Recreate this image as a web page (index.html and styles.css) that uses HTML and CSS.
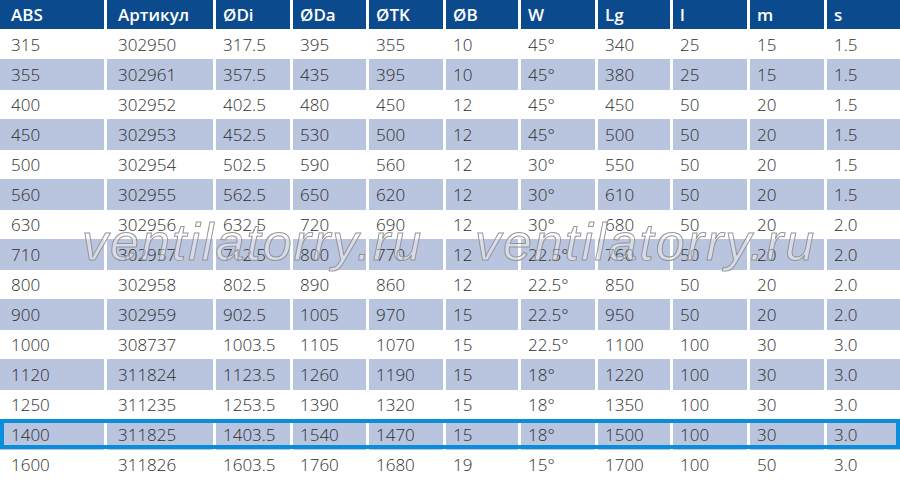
FILE: index.html
```html
<!DOCTYPE html>
<html lang="ru">
<head>
<meta charset="utf-8">
<title>ABS</title>
<link rel="stylesheet" href="styles.css">
</head>
<body>
<div class="sheet">
  <div class="row head">
    <div class="c">ABS</div><div class="c">Артикул</div><div class="c">ØDi</div><div class="c">ØDa</div><div class="c">ØTK</div><div class="c">ØB</div><div class="c">W</div><div class="c">Lg</div><div class="c">l</div><div class="c">m</div><div class="c">s</div>
  </div>
  <div class="row"><div class="c">315</div><div class="c">302950</div><div class="c">317.5</div><div class="c">395</div><div class="c">355</div><div class="c">10</div><div class="c">45°</div><div class="c">340</div><div class="c">25</div><div class="c">15</div><div class="c">1.5</div></div>
  <div class="row alt"><div class="c">355</div><div class="c">302961</div><div class="c">357.5</div><div class="c">435</div><div class="c">395</div><div class="c">10</div><div class="c">45°</div><div class="c">380</div><div class="c">25</div><div class="c">15</div><div class="c">1.5</div></div>
  <div class="row"><div class="c">400</div><div class="c">302952</div><div class="c">402.5</div><div class="c">480</div><div class="c">450</div><div class="c">12</div><div class="c">45°</div><div class="c">450</div><div class="c">50</div><div class="c">20</div><div class="c">1.5</div></div>
  <div class="row alt"><div class="c">450</div><div class="c">302953</div><div class="c">452.5</div><div class="c">530</div><div class="c">500</div><div class="c">12</div><div class="c">45°</div><div class="c">500</div><div class="c">50</div><div class="c">20</div><div class="c">1.5</div></div>
  <div class="row"><div class="c">500</div><div class="c">302954</div><div class="c">502.5</div><div class="c">590</div><div class="c">560</div><div class="c">12</div><div class="c">30°</div><div class="c">550</div><div class="c">50</div><div class="c">20</div><div class="c">1.5</div></div>
  <div class="row alt"><div class="c">560</div><div class="c">302955</div><div class="c">562.5</div><div class="c">650</div><div class="c">620</div><div class="c">12</div><div class="c">30°</div><div class="c">610</div><div class="c">50</div><div class="c">20</div><div class="c">1.5</div></div>
  <div class="row"><div class="c">630</div><div class="c">302956</div><div class="c">632.5</div><div class="c">720</div><div class="c">690</div><div class="c">12</div><div class="c">30°</div><div class="c">680</div><div class="c">50</div><div class="c">20</div><div class="c">2.0</div></div>
  <div class="row alt"><div class="c">710</div><div class="c">302957</div><div class="c">712.5</div><div class="c">800</div><div class="c">770</div><div class="c">12</div><div class="c">22.5°</div><div class="c">760</div><div class="c">50</div><div class="c">20</div><div class="c">2.0</div></div>
  <div class="row"><div class="c">800</div><div class="c">302958</div><div class="c">802.5</div><div class="c">890</div><div class="c">860</div><div class="c">12</div><div class="c">22.5°</div><div class="c">850</div><div class="c">50</div><div class="c">20</div><div class="c">2.0</div></div>
  <div class="row alt"><div class="c">900</div><div class="c">302959</div><div class="c">902.5</div><div class="c">1005</div><div class="c">970</div><div class="c">15</div><div class="c">22.5°</div><div class="c">950</div><div class="c">50</div><div class="c">20</div><div class="c">2.0</div></div>
  <div class="row"><div class="c">1000</div><div class="c">308737</div><div class="c">1003.5</div><div class="c">1105</div><div class="c">1070</div><div class="c">15</div><div class="c">22.5°</div><div class="c">1100</div><div class="c">100</div><div class="c">30</div><div class="c">3.0</div></div>
  <div class="row alt"><div class="c">1120</div><div class="c">311824</div><div class="c">1123.5</div><div class="c">1260</div><div class="c">1190</div><div class="c">15</div><div class="c">18°</div><div class="c">1220</div><div class="c">100</div><div class="c">30</div><div class="c">3.0</div></div>
  <div class="row"><div class="c">1250</div><div class="c">311235</div><div class="c">1253.5</div><div class="c">1390</div><div class="c">1320</div><div class="c">15</div><div class="c">18°</div><div class="c">1350</div><div class="c">100</div><div class="c">30</div><div class="c">3.0</div></div>
  <div class="row alt selected"><div class="c">1400</div><div class="c">311825</div><div class="c">1403.5</div><div class="c">1540</div><div class="c">1470</div><div class="c">15</div><div class="c">18°</div><div class="c">1500</div><div class="c">100</div><div class="c">30</div><div class="c">3.0</div></div>
  <div class="row"><div class="c">1600</div><div class="c">311826</div><div class="c">1603.5</div><div class="c">1760</div><div class="c">1680</div><div class="c">19</div><div class="c">15°</div><div class="c">1700</div><div class="c">100</div><div class="c">50</div><div class="c">3.0</div></div>
  <div class="mark mark-1">ventilatorry.ru</div>
  <div class="mark mark-2">ventilatorry.ru</div>
</div>
</body>
</html>
```
FILE: styles.css
```css
html, body {
  margin: 0;
  padding: 0;
  background: #ffffff;
}
.sheet {
  position: relative;
  width: 900px;
  height: 482px;
  overflow: hidden;
  font-family: "Open Sans", "Noto Sans", sans-serif;
}
.row {
  display: grid;
  grid-template-columns: 104px 106px 74px 73px 74px 72px 74px 72px 74px 74px 1fr;
  column-gap: 3px;
  height: 30px;
  position: relative;
}
.c {
  padding-left: 7px;
  font-size: 17px;
  font-weight: 300;
  line-height: 31px;
  color: #2e2e2e;
  white-space: nowrap;
}
.c:nth-child(1), .c:nth-child(2) {
  padding-left: 11px;
}
.head {
  height: 29px;
}
.head .c {
  background: #0b4a8d;
  color: #ffffff;
  font-weight: 600;
  font-size: 17px;
  line-height: 29px;
}
.alt .c {
  background: #b9c4de;
}
.selected::after {
  content: "";
  position: absolute;
  inset: 0;
  border: 4px solid #0a8ddb;
  pointer-events: none;
}
.mark {
  position: absolute;
  top: 212px;
  font-family: "Liberation Sans", Arial, sans-serif;
  font-style: italic;
  font-size: 52px;
  letter-spacing: 2px;
  line-height: 60px;
  color: rgba(255, 255, 255, 0.4);
  -webkit-text-stroke: 1px #959595;
  white-space: nowrap;
  pointer-events: none;
}
.mark-1 {
  left: 82px;
}
.mark-2 {
  left: 475px;
}
```
